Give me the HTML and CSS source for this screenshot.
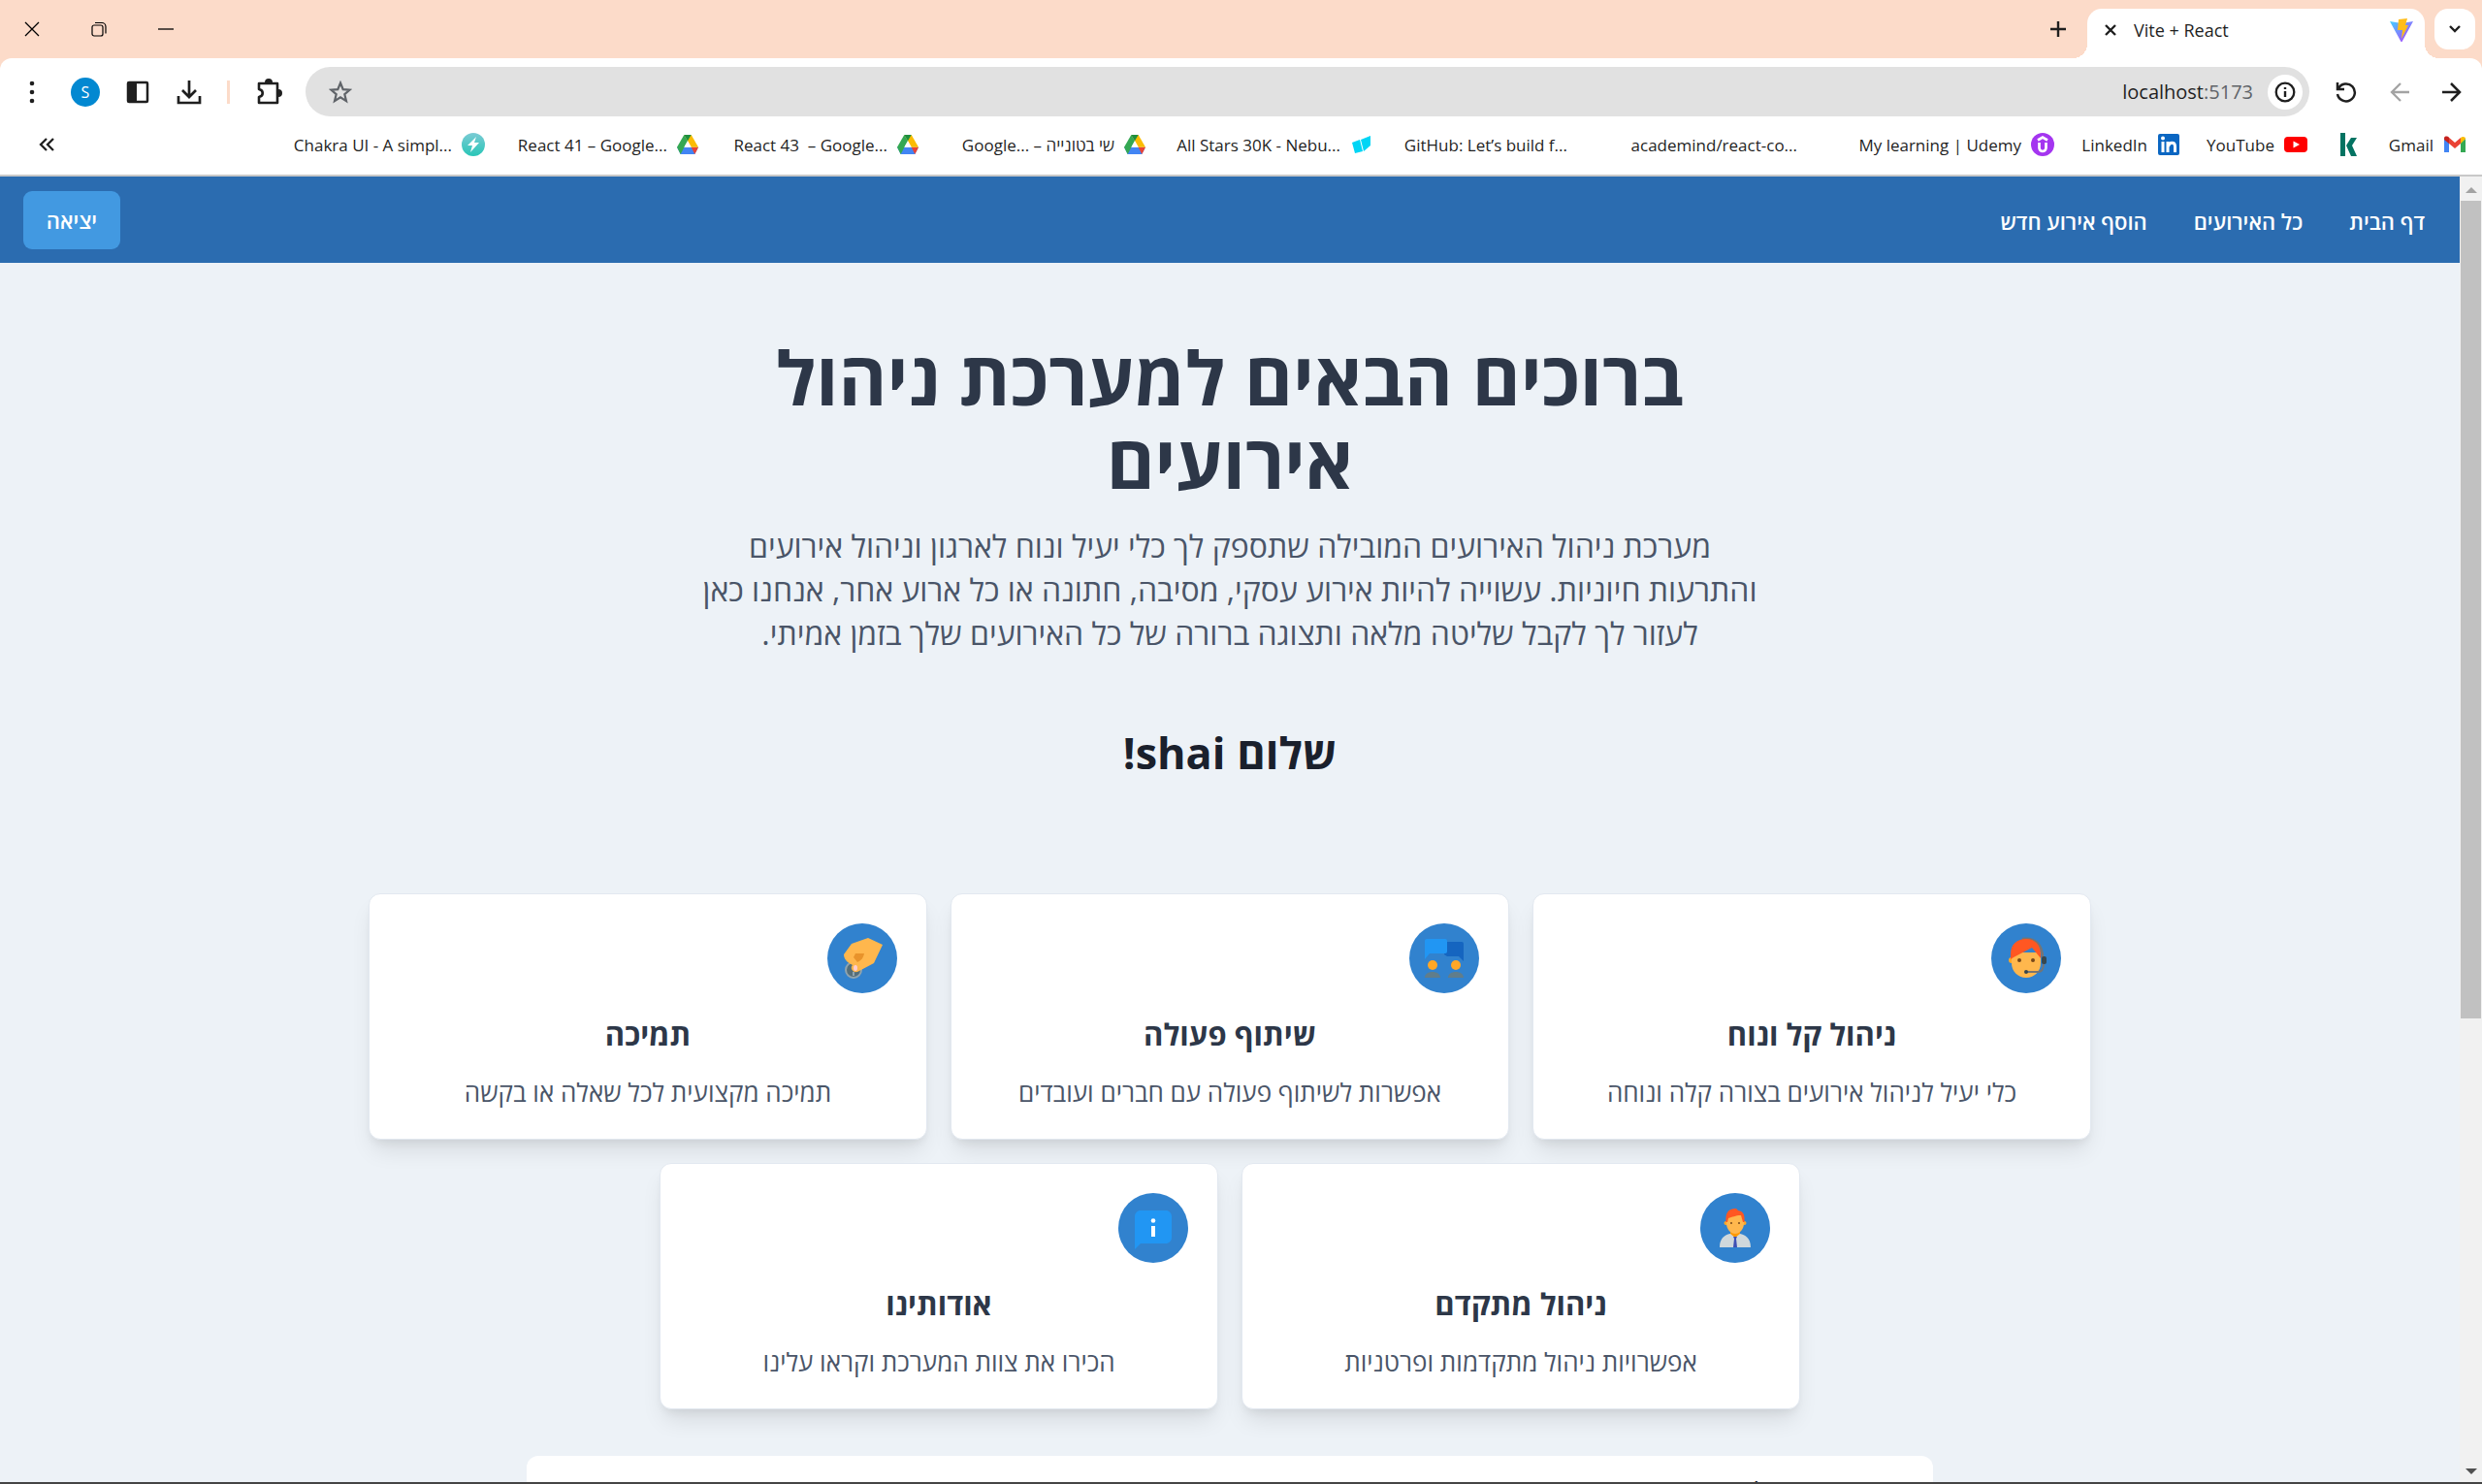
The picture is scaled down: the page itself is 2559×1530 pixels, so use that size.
FILE: index.html
```html
<!DOCTYPE html>
<html lang="he">
<head>
<meta charset="utf-8">
<title>Vite + React</title>
<link rel="stylesheet" href="styles.css">
</head>
<body>
<svg class="defs" aria-hidden="true">
  <symbol id="drive" viewBox="0 0 24 24">
    <path fill="#4285f4" d="M0 15h24l-4 8H4z"/><path fill="#ea4335" d="M16 15h8l-4 8z"/><path fill="#fbbc04" d="M8 1h8l8 14h-8z"/><path fill="#34a853" d="M8 1l4 7-8 15-4-8z"/><path fill="#1e8e3e" d="M8 1h8l-4 7z"/><path fill="#fff" d="M12 8l4 7H8z"/>
  </symbol>
</svg>

<header class="browser" dir="ltr">
  <div class="tabstrip">
    <div class="window-controls">
      <button aria-label="Close window"><svg width="16" height="16" viewBox="0 0 16 16"><path d="M1 1l14 14M15 1L1 15" stroke="#000" stroke-width="1.300"/></svg></button>
      <button aria-label="Restore"><svg width="16" height="16" viewBox="0 0 16 16" fill="none" stroke="#000" stroke-width="1.200"><rect x="1" y="4" width="11" height="11" rx="2"/><path d="M4 1.500h7a4 4 0 0 1 4 4v7"/></svg></button>
      <button aria-label="Minimize"><svg width="16" height="16" viewBox="0 0 16 16"><path d="M0 8h16" stroke="#000" stroke-width="1.300"/></svg></button>
    </div>
    <button class="new-tab" aria-label="New tab"><svg width="16" height="16" viewBox="0 0 16 16"><path d="M8 0v16M0 8h16" stroke="#1f1f1f" stroke-width="2.400"/></svg></button>
    <div class="tab">
      <button aria-label="Close tab"><svg width="12" height="12" viewBox="0 0 12 12"><path d="M1 1l10 10M11 1L1 11" stroke="#1f1f1f" stroke-width="2.400"/></svg></button>
      <span class="tab-title">Vite + React</span>
      <svg width="24" height="24" viewBox="0 0 24 24"><defs><linearGradient id="v" x1="0" y1="0" x2="1" y2="1"><stop offset="0" stop-color="#41d1ff"/><stop offset="1" stop-color="#bd34fe"/></linearGradient></defs><path fill="url(#v)" d="M0 3l12 2 12-2-12 22z"/><path fill="#ffbd1a" d="M9 1l9-1-2 7h3l-7 14 1-9H8z"/></svg>
    </div>
    <button class="tab-search" aria-label="Search tabs"><svg width="14" height="10" viewBox="0 0 14 10" fill="none" stroke="#1f1f1f" stroke-width="2.400"><path d="M2 2l5 5 5-5"/></svg></button>
  </div>

  <div class="toolbar">
    <button class="tool" aria-label="Menu"><svg width="24" height="24" viewBox="0 0 24 24" fill="#1f1f1f"><circle cx="12" cy="3" r="2.300"/><circle cx="12" cy="12" r="2.300"/><circle cx="12" cy="21" r="2.300"/></svg></button>
    <button class="avatar">S</button>
    <button class="tool" aria-label="Side panel"><svg width="24" height="24" viewBox="0 0 24 24"><rect x="2" y="2" width="20" height="20" rx="1" fill="none" stroke="#1f1f1f" stroke-width="2.500"/><path d="M2 2h9v20H2z" fill="#1f1f1f"/></svg></button>
    <button class="tool" aria-label="Downloads"><svg width="26" height="26" viewBox="0 0 26 26" fill="none" stroke="#1f1f1f" stroke-width="2.700"><path d="M13 1v16M6 11l7 7 7-7M2 17v7h22v-7"/></svg></button>
    <span class="divider"></span>
    <button class="tool" aria-label="Extensions"><svg width="28" height="28" viewBox="0 0 28 28"><path fill="none" stroke="#1f1f1f" stroke-width="2.600" stroke-linejoin="round" d="M3 5h19v20H3v-6c5-1 5-7 0-8z"/><path fill="#1f1f1f" d="M9 4a4 4 0 0 1 8 0zM23 11a4 4 0 0 1 0 8z"/></svg></button>
    <div class="address">
      <svg width="24" height="24" viewBox="0 0 24 24"><path fill="none" stroke="#5f6368" stroke-width="2.200" d="M12 2.500l2.700 6.600 7 .5-5.400 4.600 1.700 6.900-6-3.800-6 3.800 1.700-6.900L2.300 9.600l7-.5z"/></svg>
      <span class="url">localhost<span>:5173</span></span>
      <button class="site-info" aria-label="Site information"><svg width="22" height="22" viewBox="0 0 22 22"><circle cx="11" cy="11" r="9.300" fill="none" stroke="#1f1f1f" stroke-width="2.300"/><path d="M11 10v6M11 6v2" stroke="#1f1f1f" stroke-width="2.400"/></svg></button>
    </div>
    <div class="history">
      <button aria-label="Reload"><svg width="22" height="22" viewBox="0 0 22 22" fill="none" stroke="#1f1f1f" stroke-width="2.500"><path d="M3 7a9 9 0 1 1-1 6M2 1v7h7"/></svg></button>
      <button aria-label="Forward"><svg width="20" height="20" viewBox="0 0 20 20" fill="none" stroke="#a3a3a3" stroke-width="2.300"><path d="M20 10H2M11 1l-9 9 9 9"/></svg></button>
      <button aria-label="Back"><svg width="20" height="20" viewBox="0 0 20 20" fill="none" stroke="#1f1f1f" stroke-width="2.500"><path d="M0 10h18M9 1l9 9-9 9"/></svg></button>
    </div>
  </div>

  <nav class="bookmarks" aria-label="Bookmarks">
    <button class="more" aria-label="More bookmarks"><svg width="16" height="14" viewBox="0 0 16 14" fill="none" stroke="#1f1f1f" stroke-width="2.300"><path d="M8 1L2 7l6 6M15 1L9 7l6 6"/></svg></button>
    <a href="#"><span>Chakra UI - A simpl...</span><svg viewBox="0 0 24 24"><defs><linearGradient id="c" x1="0" y1="0" x2="0" y2="1"><stop offset="0" stop-color="#7bcbd4"/><stop offset="1" stop-color="#29c6b7"/></linearGradient></defs><circle cx="12" cy="12" r="12" fill="url(#c)"/><path fill="#fff" d="M15 4L6 13h5l-2 7 9-10h-5z"/></svg></a>
    <a href="#"><span>React 41 – Google...</span><svg class="small" viewBox="0 0 24 24"><use href="#drive"/></svg></a>
    <a href="#"><span>React 43 &nbsp;– Google...</span><svg class="small" viewBox="0 0 24 24"><use href="#drive"/></svg></a>
    <a href="#"><span>Google... – שי בטונייה</span><svg class="small" viewBox="0 0 24 24"><use href="#drive"/></svg></a>
    <a href="#"><span>All Stars 30K - Nebu...</span><svg viewBox="0 0 24 24"><path fill="#00d5f5" d="M2 10l8-3 3 12-8 2zM11 7l10-4v10l-7 6z"/></svg></a>
    <a href="#"><span>GitHub: Let’s build f...</span><svg viewBox="0 0 24 24"></svg></a>
    <a href="#"><span>academind/react-co...</span><svg viewBox="0 0 24 24"></svg></a>
    <a href="#"><span>My learning | Udemy</span><svg viewBox="0 0 24 24"><circle cx="12" cy="12" r="12" fill="#a435f0"/><path fill="none" stroke="#fff" stroke-width="2.700" d="M7 7.500l5-3 5 3M8.500 10v5.500a3.500 3.500 0 0 0 7 0V10"/></svg></a>
    <a href="#"><span>LinkedIn</span><svg viewBox="0 0 24 24"><rect x="1" y="1" width="22" height="22" rx="2" fill="#0a66c2"/><path fill="none" stroke="#fff" stroke-width="3" d="M6 9v11M11 9v11M11.500 14c1-5 7-5 7 0v6"/><circle cx="6" cy="5.500" r="2" fill="#fff"/></svg></a>
    <a href="#"><span>YouTube</span><svg viewBox="0 0 24 24"><rect y="4" width="24" height="16" rx="4" fill="#f00"/><path fill="#fff" d="M9.500 8.500v7l6.500-3.500z"/></svg></a>
    <a href="#" aria-label="K"><svg viewBox="0 0 24 24"><path fill="#037362" d="M4 0h5v24H4zM15 5h6l-5 8 5 11h-6l-5-11z"/></svg></a>
    <a href="#"><span>Gmail</span><svg viewBox="0 0 24 24"><path fill="#4285f4" d="M1 6l5 4v10H1z"/><path fill="#34a853" d="M18 10l5-4v14h-5z"/><path fill="#ea4335" d="M5 4l7 6 6-5v6l-6 5-6-5z"/><path fill="#c5221f" d="M1 5.500C1 3.500 3.500 3 5 4l1 1v6l-5-4z"/><path fill="#fbbc04" d="M18 5c2-2 5-1 5 1l-5 5z"/></svg></a>
  </nav>
</header>

<div class="viewport" dir="rtl">
  <div class="scrollbar" aria-hidden="true"><i class="up"></i><b></b><i class="down"></i></div>
  <div class="page">
    <nav class="navbar">
      <div class="links"><a href="#">דף הבית</a><a href="#">כל האירועים</a><a href="#">הוסף אירוע חדש</a></div>
      <button class="logout">יציאה</button>
    </nav>
    <main>
      <section class="hero">
        <h1>ברוכים הבאים למערכת ניהול אירועים</h1>
        <p>מערכת ניהול האירועים המובילה שתספק לך כלי יעיל ונוח לארגון וניהול אירועים והתרעות חיוניות. עשוייה להיות אירוע עסקי, מסיבה, חתונה או כל ארוע אחר, אנחנו כאן לעזור לך לקבל שליטה מלאה ותצוגה ברורה של כל האירועים שלך בזמן אמיתי.</p>
        <h2>שלום shai!</h2>
      </section>
      <section class="cards">
        <article class="card">
          <div class="badge"><svg viewBox="0 0 48 48"><circle cx="9" cy="26" r="3" fill="#ffa726"/><path fill="#ffb74d" d="M9 18h30v11c0 8-6 15-15 15S9 37 9 29z"/><path fill="none" stroke="#757575" stroke-width="2.500" d="M20 4c13-2 21 6 21 20"/><path fill="#ff5722" d="M8 25V20C8 9 15 4 24 4s15 6 15 16v4l-9-11-19 10z"/><circle cx="17" cy="26" r="2" fill="#784719"/><circle cx="31" cy="26" r="2" fill="#784719"/><path fill="none" stroke="#757575" stroke-width="2" d="M42 29c0 6-2 9-6 9H24"/><rect x="40" y="22" width="5" height="8" rx="2" fill="#37474f"/><circle cx="24" cy="38" r="2" fill="#37474f"/></svg></div>
          <h3>ניהול קל ונוח</h3><p>כלי יעיל לניהול אירועים בצורה קלה ונוחה</p>
        </article>
        <article class="card">
          <div class="badge"><svg viewBox="0 0 48 48"><path fill="#1565c0" d="M42 7H24v13l3 2h12l5 5V9a2 2 0 0 0-2-2z"/><path fill="#2196f3" d="M6 4h19a2 2 0 0 1 2 2v11a2 2 0 0 1-2 2H9l-5 6V6a2 2 0 0 1 2-2z"/><g fill="#ffa726"><circle cx="12" cy="31" r="5"/><circle cx="36" cy="31" r="5"/></g><path fill="#607d8b" d="M4 44c0-8 16-8 16 0zM28 44c0-8 16-8 16 0z"/></svg></div>
          <h3>שיתוף פעולה</h3><p>אפשרות לשיתוף פעולה עם חברים ועובדים</p>
        </article>
        <article class="card">
          <div class="badge"><svg viewBox="0 0 48 48"><circle cx="15" cy="36" r="8" fill="#546e7a" stroke="#90a4ae" stroke-width="2"/><path fill="#ffb74d" d="M9 28c-3-3-4-5-4-8l8-11 17-6 15 7-9 19-17 9c-5 1-8-4-5-7z"/><path fill="#e8932b" d="M17 19h9c-1 5-3 7-7 9l-4-5z"/><path stroke="#90a4ae" stroke-width="2" d="M15 38v4"/><ellipse cx="17" cy="34" rx="2" ry="3" fill="#ffcdd2"/></svg></div>
          <h3>תמיכה</h3><p>תמיכה מקצועית לכל שאלה או בקשה</p>
        </article>
        <article class="card">
          <div class="badge"><svg viewBox="0 0 48 48"><path fill="#ff9800" d="M19 26h10v8H19z"/><path fill="#cfd8dc" d="M8 44c0-10 6-13 11-14l5 4 5-4c5 1 11 4 11 14z"/><path fill="#3f51b5" d="M22 33h4l-1 2 1 9h-4l1-9z"/><circle cx="14.500" cy="19" r="2" fill="#ffa726"/><circle cx="33.500" cy="19" r="2" fill="#ffa726"/><path fill="#ffb74d" d="M15 11h18v8c0 6-4 11-9 11s-9-5-9-11z"/><path fill="#ff5722" d="M14.500 18C14 9 16 4 25 4l2 2c6 1 7 5 6.500 12L32 18l-2-7c-6 0-9 2-13 3l-1 4z"/><circle cx="20" cy="19" r="1" fill="#784719"/><circle cx="28" cy="19" r="1" fill="#784719"/></svg></div>
          <h3>ניהול מתקדם</h3><p>אפשרויות ניהול מתקדמות ופרטניות</p>
        </article>
        <article class="card">
          <div class="badge"><svg viewBox="0 0 48 48"><path fill="#2196f3" d="M37 40H11l-6 6V12c0-3.300 2.700-6 6-6h26c3.300 0 6 2.700 6 6v22c0 3.300-2.700 6-6 6z"/><path fill="#fff" d="M22 22h4v11h-4z"/><circle cx="24" cy="16.500" r="2.300" fill="#fff"/></svg></div>
          <h3>אודותינו</h3><p>הכירו את צוות המערכת וקראו עלינו</p>
        </article>
      </section>
      <section class="faq">
        <button><span>כיצד ניתן כאן ליצור אירוע?</span><svg width="20" height="18" viewBox="0 0 20 18" fill="none" stroke="#1a202c" stroke-width="2.500"><path d="M3 2l7 7 7-7"/></svg></button>
      </section>
    </main>
  </div>
</div>
<div class="edge"></div>
</body>
</html>
```
FILE: styles.css
```css
* { box-sizing: border-box; }
html, body { height: 100%; }
body {
  margin: 0;
  display: flex;
  flex-direction: column;
  overflow: hidden;
  background: #edf2f7;
  color: #1a202c;
  font-family: "Open Sans", "Noto Sans", sans-serif;
}
button { border: 0; padding: 0; background: none; font: inherit; color: inherit; display: flex; align-items: center; justify-content: center; }
a { color: inherit; text-decoration: none; }
h1, h2, h3, p { margin: 0; }
svg { display: block; flex: none; }
.defs { position: absolute; width: 0; height: 0; }

/* Browser frame */
.browser { flex: none; background: #fcdbc9; color: #1f1f1f; }
.tabstrip { height: 60px; display: flex; align-items: flex-start; padding: 9px 7px 0 25px; }
.window-controls { display: flex; gap: 53px; height: 42px; flex: 1; }
.new-tab { width: 24px; height: 42px; margin-right: 8px; }
.tab {
  position: relative;
  width: 348px;
  height: 51px;
  margin: 0 10px;
  padding: 0 12px 8px 18px;
  display: flex;
  align-items: center;
  background: #fff;
  border-radius: 15px 15px 0 0;
}
.tab::before, .tab::after {
  content: "";
  position: absolute;
  bottom: 0;
  width: 15px;
  height: 15px;
}
.tab::before { right: 100%; background: radial-gradient(circle at 0 0, transparent 15px, #fff 15px); }
.tab::after { left: 100%; background: radial-gradient(circle at 100% 0, transparent 15px, #fff 15px); }
.tab-title { flex: 1; margin-left: 18px; font-size: 18px; }
.tab-search { width: 42px; height: 42px; background: #fff; border-radius: 14px; }

.toolbar {
  height: 69px;
  padding: 0 21px 0 20px;
  display: flex;
  align-items: center;
  background: #fff;
  border-radius: 12px 12px 0 0;
}
.tool { width: 28px; height: 28px; margin-right: 25px; }
.toolbar > .tool:first-child { margin: 0 24px 0 0; width: 29px; }
.toolbar > .tool:first-child svg { margin-right: 4px; }
.avatar { width: 30px; height: 30px; margin-right: 25px; border-radius: 50%; background: #0288d1; color: #fff; font-size: 16px; }
.divider { width: 3px; height: 24px; margin-right: 27px; background: #fcdbc9; }
.address {
  flex: 1;
  height: 51px;
  margin: 0 27px 0 -2px;
  padding: 0 7px 0 24px;
  display: flex;
  align-items: center;
  background: #e1e1e1;
  border-radius: 26px;
}
.url { flex: 1; text-align: right; font-size: 20px; }
.url span { color: #5f6368; }
.site-info { width: 36px; height: 36px; margin-left: 15px; border-radius: 50%; background: #fff; }
.history { display: flex; gap: 34px; }

.bookmarks {
  height: 53px;
  padding: 0 16px 11px 40px;
  display: grid;
  grid-template-columns: 1fr 200px 190px 197px 204px 205px 204px 207px 201px 100px 101px 24px 80px;
  column-gap: 30px;
  align-items: center;
  background: #fff;
  border-bottom: 2px solid #c8c8c8;
  font-size: 17px;
}
.bookmarks a { display: flex; align-items: center; justify-content: flex-end; gap: 10px; white-space: nowrap; }
.bookmarks a svg { width: 24px; height: 24px; }
.bookmarks a .small { width: 22px; height: 22px; }
.bookmarks .more { justify-self: start; }

/* Page */
.viewport { flex: 1; min-height: 0; display: flex; flex-direction: row; overflow: hidden; }
.page { flex: 1; min-width: 0; overflow: hidden; }
.scrollbar { width: 23px; display: flex; flex-direction: column; align-items: center; background: #f1f1f1; padding-bottom: 8px; }
.scrollbar b { width: 21px; height: 63%; flex: none; background: #c1c1c1; }
.scrollbar i { border: 6px solid transparent; }
.scrollbar .up { margin: 5px 0 8px; border-bottom-color: #a3a3a3; }
.scrollbar .down { margin-top: auto; border-top-color: #505050; border-bottom: 0; }

.navbar {
  min-height: 89px;
  padding: 0 36px 0 24px;
  display: flex;
  align-items: center;
  justify-content: space-between;
  background: #2b6cb0;
  color: #fff;
  font-weight: 600;
}
.links { display: flex; gap: 48px; padding-top: 2px; font-size: 22px; }
.logout { width: 100px; height: 60px; border-radius: 9px; background: #4299e1; font-size: 22px; }

.hero { max-width: 1104px; margin: 0 auto; padding-top: 75px; text-align: center; }
.hero h1 { font-size: 76px; line-height: 86px; color: #2d3748; }
.hero p { margin-top: 22px; font-size: 32px; line-height: 45px; color: #4a5568; }
.hero h2 { margin-top: 71px; font-size: 45px; line-height: 60px; }

.cards {
  max-width: 1800px;
  margin: 115px auto 48px;
  display: flex;
  flex-wrap: wrap;
  justify-content: center;
  gap: 24px;
}
.card {
  width: 576px;
  padding: 30px;
  border: 1px solid #e2e8f0;
  border-radius: 12px;
  background: #fff;
  text-align: center;
  box-shadow: 0 15px 23px -5px rgba(0, 0, 0, .1), 0 6px 9px -3px rgba(0, 0, 0, .06);
}
.badge { width: 72px; height: 72px; display: grid; place-items: center; border-radius: 50%; background: #3182ce; }
.badge svg { width: 48px; height: 48px; }
.card h3 { margin-top: 24px; font-size: 31px; line-height: 36px; color: #2d3748; }
.card p { margin-top: 24px; font-size: 26px; line-height: 36px; color: #4a5568; }

.faq { max-width: 1450px; margin: 0 auto; padding: 12px 0; border-radius: 12px; background: #fff; }
.faq button { width: 100%; padding: 0 30px; justify-content: space-between; font-size: 26px; line-height: 48px; }
.edge { flex: none; height: 2px; background: #444; }
```
